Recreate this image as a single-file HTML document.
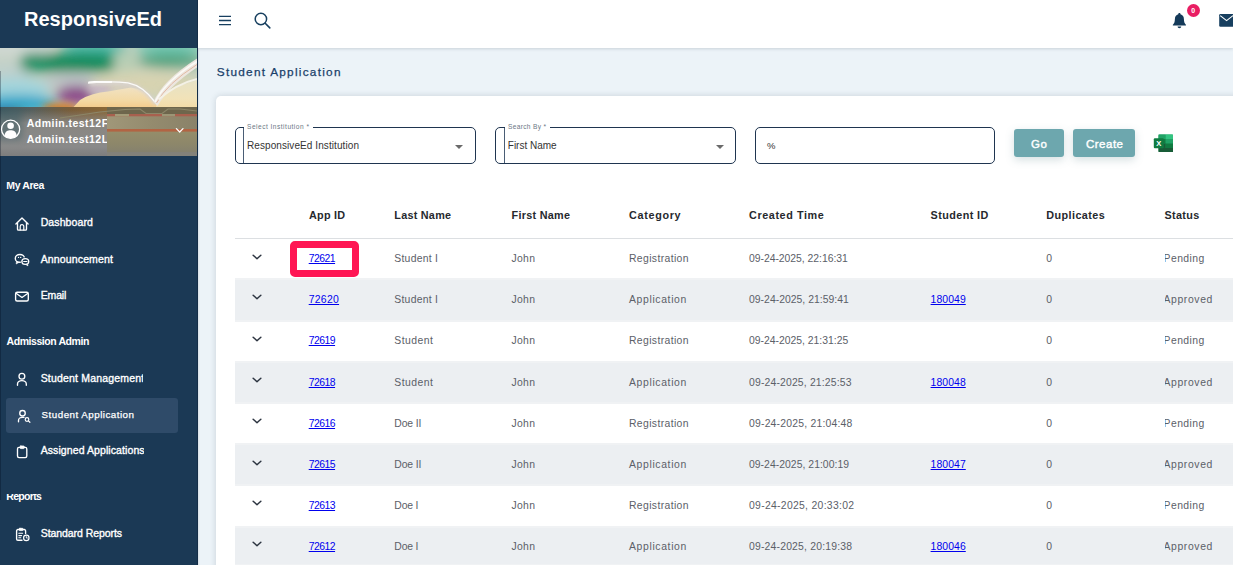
<!DOCTYPE html>
<html lang="en">
<head>
<meta charset="utf-8">
<title>Student Application</title>
<style>
html,body{margin:0;padding:0;}
body{width:1233px;height:565px;overflow:hidden;position:relative;background:#ecf3f8;font-family:'Liberation Sans',sans-serif;}
.t{position:absolute;display:block;white-space:pre;line-height:16px;font-family:'Liberation Sans',sans-serif;}
.abs{position:absolute;}
#sidebar{position:absolute;left:0;top:0;width:198px;height:565px;background:#1b3955;overflow:hidden;}
#topbar{position:absolute;left:198px;top:0;width:1035px;height:48px;background:#fff;box-shadow:0 1px 3px rgba(40,60,80,0.18);}
#card{position:absolute;left:216px;top:96px;width:1030px;height:480px;background:#fff;border-radius:5px;box-shadow:0 0 6px rgba(40,60,80,0.18);}
.gr{position:absolute;left:235px;width:998px;background:#eceff2;border-top:2px solid #f0f2f4;border-bottom:2px solid #f0f2f4;box-sizing:border-box;}
.chev{position:absolute;left:251px;}
.field{position:absolute;top:127px;height:37px;box-sizing:border-box;border:1px solid #1f3550;border-radius:5px;}
.notch{position:absolute;top:126px;height:3px;background:#fff;}
.vline{position:absolute;top:128px;height:35px;width:1px;background:#4a5d75;}
.btn{position:absolute;top:129px;height:28px;background:#6da7ae;border-radius:3px;box-shadow:0 3px 8px rgba(90,130,140,0.25);}
.arrow{position:absolute;width:0;height:0;border-left:4.2px solid transparent;border-right:4.2px solid transparent;border-top:4px solid #6a6a6a;}
</style>
</head>
<body>

<!-- ===== main background pieces ===== -->
<div id="topbar"></div>
<div id="card"></div>
<div class="abs" style="left:235px;top:238px;width:998px;height:1px;background:#dcdfe2;"></div>
<div class="gr" style="top:278px;height:44px"></div>
<div class="gr" style="top:361px;height:43px"></div>
<div class="gr" style="top:443px;height:43px"></div>
<div class="gr" style="top:526px;height:40px"></div>
<svg class="chev" style="top:252.5px" width="12" height="8" viewBox="0 0 12 8"><path d="M2.15 2.3 L6 5.7 L9.85 2.3" fill="none" stroke="#2c3440" stroke-width="1.5" stroke-linecap="round" stroke-linejoin="round"/></svg>
<svg class="chev" style="top:293.4px" width="12" height="8" viewBox="0 0 12 8"><path d="M2.15 2.3 L6 5.7 L9.85 2.3" fill="none" stroke="#2c3440" stroke-width="1.5" stroke-linecap="round" stroke-linejoin="round"/></svg>
<svg class="chev" style="top:334.7px" width="12" height="8" viewBox="0 0 12 8"><path d="M2.15 2.3 L6 5.7 L9.85 2.3" fill="none" stroke="#2c3440" stroke-width="1.5" stroke-linecap="round" stroke-linejoin="round"/></svg>
<svg class="chev" style="top:376.2px" width="12" height="8" viewBox="0 0 12 8"><path d="M2.15 2.3 L6 5.7 L9.85 2.3" fill="none" stroke="#2c3440" stroke-width="1.5" stroke-linecap="round" stroke-linejoin="round"/></svg>
<svg class="chev" style="top:417.2px" width="12" height="8" viewBox="0 0 12 8"><path d="M2.15 2.3 L6 5.7 L9.85 2.3" fill="none" stroke="#2c3440" stroke-width="1.5" stroke-linecap="round" stroke-linejoin="round"/></svg>
<svg class="chev" style="top:458.5px" width="12" height="8" viewBox="0 0 12 8"><path d="M2.15 2.3 L6 5.7 L9.85 2.3" fill="none" stroke="#2c3440" stroke-width="1.5" stroke-linecap="round" stroke-linejoin="round"/></svg>
<svg class="chev" style="top:499.0px" width="12" height="8" viewBox="0 0 12 8"><path d="M2.15 2.3 L6 5.7 L9.85 2.3" fill="none" stroke="#2c3440" stroke-width="1.5" stroke-linecap="round" stroke-linejoin="round"/></svg>
<svg class="chev" style="top:540.4px" width="12" height="8" viewBox="0 0 12 8"><path d="M2.15 2.3 L6 5.7 L9.85 2.3" fill="none" stroke="#2c3440" stroke-width="1.5" stroke-linecap="round" stroke-linejoin="round"/></svg>

<!-- highlight box -->
<div class="abs" style="left:290px;top:241px;width:69px;height:36px;box-sizing:border-box;border:7px solid #ff1654;border-radius:5px;"></div>

<!-- form fields -->
<div class="field" style="left:235px;width:241px;"></div>
<div class="notch" style="left:244px;width:69px;"></div>
<div class="vline" style="left:243px;"></div>
<div class="arrow" style="left:455px;top:145px;"></div>

<div class="field" style="left:495px;width:241px;"></div>
<div class="notch" style="left:505px;width:45px;"></div>
<div class="vline" style="left:504px;"></div>
<div class="arrow" style="left:715.5px;top:145px;"></div>

<div class="field" style="left:755px;width:240px;"></div>

<div class="btn" style="left:1014px;width:50px;"></div>
<div class="btn" style="left:1073px;width:62px;"></div>

<!-- excel icon -->
<svg class="abs" style="left:1153px;top:134px" width="21" height="19" viewBox="0 0 21 19">
  <rect x="5.5" y="0.5" width="14.5" height="17.5" rx="1.2" fill="#21a366"/>
  <rect x="5.5" y="0.5" width="7.2" height="4.6" fill="#21a366"/>
  <rect x="12.7" y="0.5" width="7.3" height="4.6" fill="#33c481"/>
  <rect x="5.5" y="5.1" width="7.2" height="4.4" fill="#107c41"/>
  <rect x="12.7" y="5.1" width="7.3" height="4.4" fill="#21a366"/>
  <rect x="5.5" y="9.5" width="7.2" height="4.4" fill="#185c37"/>
  <rect x="12.7" y="9.5" width="7.3" height="4.4" fill="#107c41"/>
  <rect x="5.5" y="13.9" width="14.5" height="4.1" fill="#185c37"/>
  <rect x="0.8" y="4.3" width="10" height="10" rx="1" fill="#107c41"/>
  <text x="5.8" y="12.2" font-family="'Liberation Sans',sans-serif" font-size="7.6" font-weight="700" fill="#fff" text-anchor="middle">X</text>
</svg>

<!-- topbar icons -->
<svg class="abs" style="left:218px;top:14px" width="14" height="13" viewBox="0 0 14 13">
  <path d="M1 2.4H13M1 6.5H13M1 10.6H13" stroke="#173f5f" stroke-width="1.35" fill="none"/>
</svg>
<svg class="abs" style="left:252px;top:10px" width="20" height="20" viewBox="0 0 20 20">
  <circle cx="8.9" cy="9" r="5.7" fill="none" stroke="#173f5f" stroke-width="1.5"/>
  <path d="M13.2 13.3 L17.8 17.9" stroke="#173f5f" stroke-width="1.6" stroke-linecap="round"/>
</svg>
<svg class="abs" style="left:1171px;top:12px" width="17" height="18" viewBox="0 0 17 18">
  <path d="M8.4 1.1 C9.1 1.1 9.5 1.6 9.5 2.2 C11.7 2.8 12.9 4.6 12.9 7 C12.9 10.3 13.8 11.5 14.9 12.7 C15.2 13 15 13.5 14.5 13.5 H2.3 C1.8 13.5 1.6 13 1.9 12.7 C3 11.5 3.9 10.3 3.9 7 C3.9 4.6 5.1 2.8 7.3 2.2 C7.3 1.6 7.7 1.1 8.4 1.1 Z" fill="#143a59"/>
  <path d="M6.6 14.6 H10.2 C10.2 15.6 9.4 16.3 8.4 16.3 C7.4 16.3 6.6 15.6 6.6 14.6 Z" fill="#143a59"/>
</svg>
<div class="abs" style="left:1187px;top:4px;width:13px;height:13px;border-radius:50%;background:#e91e63;"></div>
<span class="t" style="left:1191.3px;top:2.8px;font-size:7px;font-weight:700;color:#fff;line-height:16px;">0</span>
<svg class="abs" style="left:1219px;top:13px" width="16" height="15" viewBox="0 0 16 15">
  <rect x="0.2" y="1" width="20" height="12.8" rx="1.3" fill="#173f5f"/>
  <path d="M1.2 2.6 L7.6 7.6 L14 2.6" fill="none" stroke="#fff" stroke-width="1.2"/>
</svg>

<!-- ===== sidebar ===== -->
<div id="sidebar">
  <svg class="abs" style="left:0;top:48px" width="197" height="108" viewBox="0 0 197 108">
  <defs>
    <filter id="b7" x="-30%" y="-30%" width="160%" height="160%"><feGaussianBlur stdDeviation="6"/></filter>
    <filter id="b4" x="-30%" y="-30%" width="160%" height="160%"><feGaussianBlur stdDeviation="3.5"/></filter>
    <filter id="b2" x="-20%" y="-20%" width="140%" height="140%"><feGaussianBlur stdDeviation="1.6"/></filter>
    <filter id="b1" x="-10%" y="-10%" width="120%" height="120%"><feGaussianBlur stdDeviation="0.6"/></filter>
    <linearGradient id="cream" x1="0" y1="0" x2="0" y2="1"><stop offset="0" stop-color="#f1e2c2"/><stop offset="0.55" stop-color="#f3d9a4"/><stop offset="1" stop-color="#f4c580"/></linearGradient>
    <linearGradient id="cream2" x1="0" y1="0" x2="0" y2="1"><stop offset="0" stop-color="#e6e2c6"/><stop offset="0.6" stop-color="#f1e2b8"/><stop offset="1" stop-color="#f4d9a0"/></linearGradient>
    <linearGradient id="low" x1="0" y1="0" x2="1" y2="0"><stop offset="0" stop-color="#3f575e"/><stop offset="0.16" stop-color="#56605e"/><stop offset="0.36" stop-color="#7a5d38"/><stop offset="0.55" stop-color="#8a6838"/><stop offset="1" stop-color="#6e644b"/></linearGradient>
    <linearGradient id="low2" x1="0" y1="0" x2="0" y2="1"><stop offset="0" stop-color="rgba(132,130,126,0)"/><stop offset="0.28" stop-color="rgba(138,137,134,0.92)"/><stop offset="0.8" stop-color="#8a8a8a"/><stop offset="1" stop-color="#7d7d7d"/></linearGradient>
    <linearGradient id="blk1" x1="0" y1="0" x2="1" y2="0"><stop offset="0" stop-color="#a09779"/><stop offset="0.5" stop-color="#948b6e"/><stop offset="1" stop-color="#8a8269"/></linearGradient>
    <linearGradient id="blk2" x1="0" y1="0" x2="0" y2="1"><stop offset="0" stop-color="#958d6a"/><stop offset="0.6" stop-color="#8d876a"/><stop offset="1" stop-color="#85816e"/></linearGradient>
    <clipPath id="pc"><rect x="0" y="0" width="197" height="108"/></clipPath>
  </defs>
  <g clip-path="url(#pc)">
    <rect width="197" height="108" fill="#c8d2c2"/>
    <g filter="url(#b7)">
      <rect x="-10" y="-8" width="62" height="15" fill="#cfd8d4"/>
      <rect x="-10" y="14" width="40" height="16" fill="#bfd0cc"/>
      <ellipse cx="95" cy="0" rx="34" ry="6" fill="#45b8a6"/>
      <ellipse cx="170" cy="0" rx="36" ry="7" fill="#6cc6b0"/>
      <rect x="20" y="5" width="96" height="19" rx="9" fill="#1f9266"/>
      <ellipse cx="76" cy="15" rx="32" ry="9" fill="#158a5c"/>
      <ellipse cx="170" cy="13" rx="34" ry="7" fill="#58a27e"/>
      <ellipse cx="126" cy="14" rx="12" ry="10" fill="#b7ceb4"/>
      <ellipse cx="14" cy="41" rx="36" ry="11" fill="#a2d4dc"/>
      <ellipse cx="72" cy="33" rx="28" ry="7" fill="#bcc2c6"/>
      <ellipse cx="145" cy="36" rx="54" ry="13" fill="#d7d3b1"/>
      <ellipse cx="18" cy="56" rx="40" ry="9" fill="#2ba6c8"/>
      <ellipse cx="-4" cy="64" rx="22" ry="5" fill="#3c8cc8"/>
      <ellipse cx="76" cy="47" rx="20" ry="9" fill="#8a3f86"/>
      <ellipse cx="76" cy="48" rx="10" ry="5" fill="#8a3f86"/>
    </g>
    <g filter="url(#b4)">
      <ellipse cx="60" cy="60" rx="18" ry="5" fill="#d07c28"/>
      <ellipse cx="100" cy="41" rx="14" ry="4" fill="#c8b4ca"/>
      <ellipse cx="125" cy="40" rx="14" ry="3" fill="#d6cbc6"/>
      <ellipse cx="176" cy="44" rx="16" ry="5" fill="#cdcbaa"/>
    </g>
    <!-- left page -->
    <path d="M70 63 L80 52 Q92 44.500 108 43.500 L131 39.500 Q142 41 148 47 L156 57 L156 63 Z" fill="url(#cream)" filter="url(#b1)"/>
    <path d="M90 36 Q112 34 130 36.500 Q145 40 155.500 56" fill="none" stroke="#d9d3d2" stroke-width="3.6" filter="url(#b2)" opacity="0.85"/>
    <path d="M88.500 34.800 Q100 33.600 112 34" fill="none" stroke="#ffffff" stroke-width="2.6" filter="url(#b1)"/>
    <path d="M88 35 Q110 32.800 128 34.800 Q143 37.800 154.500 53.500" fill="none" stroke="#fbfaf8" stroke-width="1.3" filter="url(#b1)"/>
    <!-- right pages -->
    <path d="M156 63 L156 55 Q166 41 182 37 L197 32 L197 63 Z" fill="url(#cream2)" filter="url(#b1)"/>
    <path d="M153.500 54 Q162 33 197 10.500 L197 19.500 Q169 38 157.500 58 Z" fill="#ece6df" filter="url(#b1)"/>
    <path d="M155 54 Q165 33.500 197 13.500" fill="none" stroke="#fbfaf6" stroke-width="1.6" filter="url(#b1)"/>
    <path d="M156.500 55 Q167 35.500 197 16.500" fill="none" stroke="#e2b9a4" stroke-width="1" filter="url(#b1)"/>
    <path d="M158.500 51.500 Q176 36 197 31" fill="none" stroke="#f4f1e6" stroke-width="1.8" filter="url(#b1)"/>
    <path d="M156 57 L156 63" stroke="#fbf6ea" stroke-width="1.4" filter="url(#b1)"/>
    <!-- lower (overlaid) zone -->
    <rect x="0" y="59" width="197" height="49" fill="url(#low)"/>
    <rect x="0" y="62" width="197" height="46" fill="url(#low2)"/>
    <rect x="-4" y="60" width="26" height="32" fill="#3f6068" opacity="0.5" filter="url(#b4)"/>
    <rect x="107" y="59" width="90" height="7.500" fill="#6e664c"/>
    <path d="M60 70 L100 64 L125 61.500 L140 61 L146 65.500 L162 65.500 L168 61 L180 61 L197 63" fill="none" stroke="#8c8668" stroke-width="1.1" filter="url(#b1)"/>
    <rect x="107" y="66" width="90" height="15.500" fill="url(#blk1)"/>
    <rect x="107" y="83" width="90" height="21.500" fill="url(#blk2)"/>
    <rect x="107" y="66" width="90" height="2.300" fill="#a8604e"/>
    <rect x="115" y="66" width="14" height="2.300" fill="#a39b78"/>
    <rect x="162" y="66" width="13" height="2.300" fill="#9c9676"/>
    <rect x="107" y="81" width="90" height="2.600" fill="#b26443"/>
    <rect x="107" y="104.500" width="90" height="3.500" fill="#84827a"/>
  </g>
</svg>

  <div class="abs" style="left:6px;top:398px;width:172px;height:35px;border-radius:3px;background:#2f4b69;"></div>
  <svg class="abs" style="left:0;top:0" width="198" height="565" viewBox="0 0 198 565" fill="none" stroke="#fff" stroke-width="1.35" stroke-linecap="round" stroke-linejoin="round">
  <!-- user avatar -->
  <circle cx="10.6" cy="129.300" r="9.100" stroke-width="1.3"/>
  <circle cx="10.6" cy="125.700" r="3.300" fill="#fff" stroke="none"/>
  <path d="M4.500 135.600 C5 131.500 7.600 130.300 10.600 130.300 C13.600 130.300 16.200 131.500 16.700 135.600 C15 137.400 13 138.300 10.600 138.300 C8.200 138.300 6.200 137.400 4.500 135.600 Z" fill="#fff" stroke="none"/>
  <!-- user chevron -->
  <path d="M176.400 128.600 L179.700 132 L183 128.600" stroke-width="1.3"/>
  <!-- home -->
  <path d="M15.900 224 L22 217.900 L28.100 224"/>
  <path d="M17.500 222.900 V229.200 a0.900 0.900 0 0 0 .9 .9 H25.600 a.9 .9 0 0 0 .9 -.9 V222.900"/>
  <path d="M20.200 229.900 V226.400 a1.800 1.800 0 0 1 3.600 0 V229.900" stroke-width="1.2"/>
  <!-- announcement (chat bubbles) -->
  <ellipse cx="19.900" cy="258.400" rx="4.600" ry="3.900" stroke-width="1.4"/>
  <path d="M16.500 261.500 L16.200 264 L18.700 262.500 Z" fill="#fff" stroke-width="0.6"/>
  <circle cx="18.500" cy="257.400" r="0.700" fill="#fff" stroke="none"/>
  <circle cx="20.700" cy="257.400" r="0.700" fill="#fff" stroke="none"/>
  <ellipse cx="25.300" cy="261.500" rx="3.500" ry="3" fill="#1b3955" stroke="#1b3955" stroke-width="2.3"/>
  <path d="M27.200 264 L28 265.900 L25.800 264.600 Z" fill="#fff" stroke-width="0.6"/>
  <ellipse cx="25.300" cy="261.500" rx="3.400" ry="2.900" fill="#1b3955" stroke-width="1.4"/>
  <path d="M23.700 261.500 H26.900" stroke-width="1.2"/>
  <!-- email -->
  <rect x="15.600" y="292.200" width="12.700" height="8.800" rx="1.500"/>
  <path d="M16.400 293.400 L22 297.400 L27.600 293.400" stroke-width="1.25"/>
  <!-- student management (person) -->
  <circle cx="21.900" cy="376.300" r="2.900"/>
  <path d="M17.500 385.200 V384 a4.400 3.400 0 0 1 8.800 0 V385.200"/>
  <!-- student application (person+search) -->
  <circle cx="22.500" cy="413.200" r="2.750"/>
  <path d="M18.500 421.800 V420.400 a3.700 3.100 0 0 1 3.700 -3.100 H24"/>
  <circle cx="27" cy="419.500" r="1.800" stroke-width="1.2"/>
  <path d="M28.400 420.900 L29.900 422.300" stroke-width="1.2"/>
  <!-- assigned applications (clipboard) -->
  <rect x="17.500" y="447.400" width="9.300" height="10.200" rx="1.500"/>
  <rect x="20" y="446" width="4.300" height="2.600" rx="0.800" fill="#fff" stroke-width="0.8"/>
  <!-- standard reports -->
  <path d="M25.600 533.500 V530.800 a1.300 1.300 0 0 0 -1.300 -1.300 H17.900 a1.300 1.300 0 0 0 -1.300 1.300 V538.900 a1.300 1.300 0 0 0 1.300 1.300 H22"/>
  <rect x="19.200" y="528.300" width="3.800" height="2.300" rx="0.700" fill="#fff" stroke-width="0.7"/>
  <path d="M18.800 533.300 H22.600 M18.800 535.600 H21.600 M18.800 537.800 H20.800" stroke-width="1.1"/>
  <circle cx="26.300" cy="537.900" r="2.700" stroke-width="1.200"/>
  <path d="M26.300 536.600 V538 H27.400" stroke-width="0.9"/>
</svg>

</div>
<div class="abs" style="left:196.500px;top:0;width:1.5px;height:565px;background:rgba(5,20,40,0.30);"></div>
<div class="abs" style="left:198px;top:48px;width:2px;height:517px;background:linear-gradient(90deg,rgba(30,50,70,0.10),rgba(30,50,70,0));"></div>
<div class="abs" style="left:0;top:71px;width:1.2px;height:429px;background:rgba(0,10,25,0.30);"></div>

<span class="t" style="left:24.0px;top:11.00px;font-size:20px;font-weight:700;color:#fff;letter-spacing:0.016px;">ResponsiveEd</span>
<div class="abs" style="left:0px;top:182.3px;width:100.0px;height:17.7px;overflow:hidden;"><span class="t" style="left:6.3px;top:-5.30px;font-size:10.5px;font-weight:700;color:#fff;letter-spacing:-0.395px;">My Area</span></div>
<span class="t" style="left:40.7px;top:214.00px;font-size:10.5px;font-weight:400;color:#fff;letter-spacing:0.103px;-webkit-text-stroke:0.35px #fff;">Dashboard</span>
<span class="t" style="left:40.7px;top:251.00px;font-size:10.5px;font-weight:400;color:#fff;letter-spacing:0.142px;-webkit-text-stroke:0.35px #fff;">Announcement</span>
<span class="t" style="left:40.7px;top:287.00px;font-size:10.5px;font-weight:400;color:#fff;letter-spacing:-0.141px;-webkit-text-stroke:0.35px #fff;">Email</span>
<span class="t" style="left:6.5px;top:333.00px;font-size:10.5px;font-weight:700;color:#fff;letter-spacing:-0.427px;">Admission Admin</span>
<div class="abs" style="left:20px;top:119.2px;width:86.7px;height:14.8px;overflow:hidden;"><span class="t" style="left:6.8px;top:-4.20px;font-size:10.5px;font-weight:700;color:#fff;letter-spacing:0.462px;">Admiin.test12First</span></div>
<div class="abs" style="left:20px;top:131px;width:86.7px;height:19.0px;overflow:hidden;"><span class="t" style="left:6.8px;top:0.00px;font-size:10.5px;font-weight:700;color:#fff;letter-spacing:0.462px;">Admiin.test12Last</span></div>
<div class="abs" style="left:30px;top:368px;width:113.0px;height:24.0px;overflow:hidden;"><span class="t" style="left:10.7px;top:2.00px;font-size:10.5px;font-weight:400;color:#fff;letter-spacing:0.182px;-webkit-text-stroke:0.35px #fff;">Student Management</span></div>
<div class="abs" style="left:30px;top:440px;width:113.6px;height:24.0px;overflow:hidden;"><span class="t" style="left:10.7px;top:2.00px;font-size:10.5px;font-weight:400;color:#fff;letter-spacing:0.087px;-webkit-text-stroke:0.35px #fff;">Assigned Applications</span></div>
<div class="abs" style="left:0px;top:494px;width:100.0px;height:16.0px;overflow:hidden;"><span class="t" style="left:6.3px;top:-6.00px;font-size:10.5px;font-weight:700;color:#fff;letter-spacing:-0.698px;">Reports</span></div>
<span class="t" style="left:41.6px;top:407.00px;font-size:9.8px;font-weight:400;color:#fff;letter-spacing:0.473px;-webkit-text-stroke:0.25px #fff;">Student Application</span>
<span class="t" style="left:40.7px;top:525.00px;font-size:10.5px;font-weight:400;color:#fff;letter-spacing:-0.061px;-webkit-text-stroke:0.35px #fff;">Standard Reports</span>
<span class="t" style="left:216.8px;top:64.00px;font-size:11.8px;font-weight:400;color:#19406a;letter-spacing:1.260px;-webkit-text-stroke:0.25px #19406a;">Student Application</span>
<span class="t" style="left:247.0px;top:138.00px;font-size:10px;font-weight:400;color:#333;letter-spacing:0.084px;">ResponsiveEd Institution</span>
<span class="t" style="left:507.8px;top:138.00px;font-size:10px;font-weight:400;color:#333;letter-spacing:-0.001px;">First Name</span>
<span class="t" style="left:767.0px;top:138.00px;font-size:9.5px;font-weight:400;color:#333;letter-spacing:-1.453px;">%</span>
<span class="t" style="left:247.0px;top:119.00px;font-size:6.6px;font-weight:400;color:#6b7785;letter-spacing:0.485px;">Select Institution *</span>
<span class="t" style="left:508.0px;top:119.00px;font-size:6.6px;font-weight:400;color:#6b7785;letter-spacing:0.317px;">Search By *</span>
<span class="t" style="left:1031.0px;top:136.00px;font-size:11.5px;font-weight:400;color:#fff;letter-spacing:0.656px;-webkit-text-stroke:0.4px #fff;">Go</span>
<span class="t" style="left:1086.0px;top:136.00px;font-size:11.5px;font-weight:400;color:#fff;letter-spacing:0.494px;-webkit-text-stroke:0.4px #fff;">Create</span>
<span class="t" style="left:309.1px;top:207.00px;font-size:10.8px;font-weight:700;color:#26292e;letter-spacing:0.221px;">App ID</span>
<span class="t" style="left:394.3px;top:207.00px;font-size:10.8px;font-weight:700;color:#26292e;letter-spacing:0.261px;">Last Name</span>
<span class="t" style="left:511.5px;top:207.00px;font-size:10.8px;font-weight:700;color:#26292e;letter-spacing:0.299px;">First Name</span>
<span class="t" style="left:629.0px;top:207.00px;font-size:10.8px;font-weight:700;color:#26292e;letter-spacing:0.684px;">Category</span>
<span class="t" style="left:749.0px;top:207.00px;font-size:10.8px;font-weight:700;color:#26292e;letter-spacing:0.598px;">Created Time</span>
<span class="t" style="left:930.6px;top:207.00px;font-size:10.8px;font-weight:700;color:#26292e;letter-spacing:0.413px;">Student ID</span>
<span class="t" style="left:1046.3px;top:207.00px;font-size:10.8px;font-weight:700;color:#26292e;letter-spacing:0.421px;">Duplicates</span>
<span class="t" style="left:1164.6px;top:207.00px;font-size:10.8px;font-weight:700;color:#26292e;letter-spacing:0.320px;">Status</span>
<a class="t" style="left:308.7px;top:251.00px;font-size:10.4px;font-weight:400;color:#0000ee;letter-spacing:-0.502px;text-decoration:underline;">72621</a>
<span class="t" style="left:394.3px;top:251.00px;font-size:10.4px;font-weight:400;color:#5b6068;letter-spacing:0.251px;">Student I</span>
<span class="t" style="left:511.5px;top:251.00px;font-size:10.4px;font-weight:400;color:#5b6068;letter-spacing:0.318px;">John</span>
<span class="t" style="left:629.0px;top:251.00px;font-size:10.4px;font-weight:400;color:#5b6068;letter-spacing:0.368px;">Registration</span>
<span class="t" style="left:749.0px;top:251.00px;font-size:10.4px;font-weight:400;color:#5b6068;letter-spacing:-0.030px;">09-24-2025, 22:16:31</span>
<span class="t" style="left:1046.3px;top:251.00px;font-size:10.4px;font-weight:400;color:#5b6068;letter-spacing:-0.081px;">0</span>
<div class="abs" style="left:1164.6px;top:248px;width:68.4px;height:22.0px;overflow:hidden;"><span class="t" style="left:-1.0px;top:3.00px;font-size:10.4px;font-weight:400;color:#5b6068;letter-spacing:0.427px;">Pending</span></div>
<a class="t" style="left:308.7px;top:292.00px;font-size:10.4px;font-weight:400;color:#0000ee;letter-spacing:0.298px;text-decoration:underline;">72620</a>
<span class="t" style="left:394.3px;top:292.00px;font-size:10.4px;font-weight:400;color:#5b6068;letter-spacing:0.251px;">Student I</span>
<span class="t" style="left:511.5px;top:292.00px;font-size:10.4px;font-weight:400;color:#5b6068;letter-spacing:0.318px;">John</span>
<span class="t" style="left:629.0px;top:292.00px;font-size:10.4px;font-weight:400;color:#5b6068;letter-spacing:0.646px;">Application</span>
<span class="t" style="left:749.0px;top:292.00px;font-size:10.4px;font-weight:400;color:#5b6068;letter-spacing:0.022px;">09-24-2025, 21:59:41</span>
<a class="t" style="left:930.6px;top:292.00px;font-size:10.4px;font-weight:400;color:#0000ee;letter-spacing:0.083px;text-decoration:underline;">180049</a>
<span class="t" style="left:1046.3px;top:292.00px;font-size:10.4px;font-weight:400;color:#5b6068;letter-spacing:-0.081px;">0</span>
<div class="abs" style="left:1164.6px;top:289px;width:68.4px;height:22.0px;overflow:hidden;"><span class="t" style="left:-1.2px;top:3.00px;font-size:10.4px;font-weight:400;color:#5b6068;letter-spacing:0.645px;">Approved</span></div>
<a class="t" style="left:308.7px;top:333.00px;font-size:10.4px;font-weight:400;color:#0000ee;letter-spacing:-0.502px;text-decoration:underline;">72619</a>
<span class="t" style="left:394.3px;top:333.00px;font-size:10.4px;font-weight:400;color:#5b6068;letter-spacing:0.479px;">Student</span>
<span class="t" style="left:511.5px;top:333.00px;font-size:10.4px;font-weight:400;color:#5b6068;letter-spacing:0.318px;">John</span>
<span class="t" style="left:629.0px;top:333.00px;font-size:10.4px;font-weight:400;color:#5b6068;letter-spacing:0.368px;">Registration</span>
<span class="t" style="left:749.0px;top:333.00px;font-size:10.4px;font-weight:400;color:#5b6068;letter-spacing:-0.009px;">09-24-2025, 21:31:25</span>
<span class="t" style="left:1046.3px;top:333.00px;font-size:10.4px;font-weight:400;color:#5b6068;letter-spacing:-0.081px;">0</span>
<div class="abs" style="left:1164.6px;top:330px;width:68.4px;height:22.0px;overflow:hidden;"><span class="t" style="left:-1.0px;top:3.00px;font-size:10.4px;font-weight:400;color:#5b6068;letter-spacing:0.427px;">Pending</span></div>
<a class="t" style="left:308.7px;top:375.00px;font-size:10.4px;font-weight:400;color:#0000ee;letter-spacing:-0.502px;text-decoration:underline;">72618</a>
<span class="t" style="left:394.3px;top:375.00px;font-size:10.4px;font-weight:400;color:#5b6068;letter-spacing:0.479px;">Student</span>
<span class="t" style="left:511.5px;top:375.00px;font-size:10.4px;font-weight:400;color:#5b6068;letter-spacing:0.318px;">John</span>
<span class="t" style="left:629.0px;top:375.00px;font-size:10.4px;font-weight:400;color:#5b6068;letter-spacing:0.646px;">Application</span>
<span class="t" style="left:749.0px;top:375.00px;font-size:10.4px;font-weight:400;color:#5b6068;letter-spacing:0.164px;">09-24-2025, 21:25:53</span>
<a class="t" style="left:930.6px;top:375.00px;font-size:10.4px;font-weight:400;color:#0000ee;letter-spacing:0.083px;text-decoration:underline;">180048</a>
<span class="t" style="left:1046.3px;top:375.00px;font-size:10.4px;font-weight:400;color:#5b6068;letter-spacing:-0.081px;">0</span>
<div class="abs" style="left:1164.6px;top:372px;width:68.4px;height:22.0px;overflow:hidden;"><span class="t" style="left:-1.2px;top:3.00px;font-size:10.4px;font-weight:400;color:#5b6068;letter-spacing:0.645px;">Approved</span></div>
<a class="t" style="left:308.7px;top:416.00px;font-size:10.4px;font-weight:400;color:#0000ee;letter-spacing:-0.502px;text-decoration:underline;">72616</a>
<span class="t" style="left:394.3px;top:416.00px;font-size:10.4px;font-weight:400;color:#5b6068;letter-spacing:-0.107px;">Doe II</span>
<span class="t" style="left:511.5px;top:416.00px;font-size:10.4px;font-weight:400;color:#5b6068;letter-spacing:0.318px;">John</span>
<span class="t" style="left:629.0px;top:416.00px;font-size:10.4px;font-weight:400;color:#5b6068;letter-spacing:0.368px;">Registration</span>
<span class="t" style="left:749.0px;top:416.00px;font-size:10.4px;font-weight:400;color:#5b6068;letter-spacing:0.207px;">09-24-2025, 21:04:48</span>
<span class="t" style="left:1046.3px;top:416.00px;font-size:10.4px;font-weight:400;color:#5b6068;letter-spacing:-0.081px;">0</span>
<div class="abs" style="left:1164.6px;top:413px;width:68.4px;height:22.0px;overflow:hidden;"><span class="t" style="left:-1.0px;top:3.00px;font-size:10.4px;font-weight:400;color:#5b6068;letter-spacing:0.427px;">Pending</span></div>
<a class="t" style="left:308.7px;top:457.00px;font-size:10.4px;font-weight:400;color:#0000ee;letter-spacing:-0.502px;text-decoration:underline;">72615</a>
<span class="t" style="left:394.3px;top:457.00px;font-size:10.4px;font-weight:400;color:#5b6068;letter-spacing:-0.107px;">Doe II</span>
<span class="t" style="left:511.5px;top:457.00px;font-size:10.4px;font-weight:400;color:#5b6068;letter-spacing:0.318px;">John</span>
<span class="t" style="left:629.0px;top:457.00px;font-size:10.4px;font-weight:400;color:#5b6068;letter-spacing:0.646px;">Application</span>
<span class="t" style="left:749.0px;top:457.00px;font-size:10.4px;font-weight:400;color:#5b6068;letter-spacing:0.033px;">09-24-2025, 21:00:19</span>
<a class="t" style="left:930.6px;top:457.00px;font-size:10.4px;font-weight:400;color:#0000ee;letter-spacing:0.083px;text-decoration:underline;">180047</a>
<span class="t" style="left:1046.3px;top:457.00px;font-size:10.4px;font-weight:400;color:#5b6068;letter-spacing:-0.081px;">0</span>
<div class="abs" style="left:1164.6px;top:454px;width:68.4px;height:22.0px;overflow:hidden;"><span class="t" style="left:-1.2px;top:3.00px;font-size:10.4px;font-weight:400;color:#5b6068;letter-spacing:0.645px;">Approved</span></div>
<a class="t" style="left:308.7px;top:498.00px;font-size:10.4px;font-weight:400;color:#0000ee;letter-spacing:-0.502px;text-decoration:underline;">72613</a>
<span class="t" style="left:394.3px;top:498.00px;font-size:10.4px;font-weight:400;color:#5b6068;letter-spacing:-0.161px;">Doe I</span>
<span class="t" style="left:511.5px;top:498.00px;font-size:10.4px;font-weight:400;color:#5b6068;letter-spacing:0.318px;">John</span>
<span class="t" style="left:629.0px;top:498.00px;font-size:10.4px;font-weight:400;color:#5b6068;letter-spacing:0.368px;">Registration</span>
<span class="t" style="left:749.0px;top:498.00px;font-size:10.4px;font-weight:400;color:#5b6068;letter-spacing:0.296px;">09-24-2025, 20:33:02</span>
<span class="t" style="left:1046.3px;top:498.00px;font-size:10.4px;font-weight:400;color:#5b6068;letter-spacing:-0.081px;">0</span>
<div class="abs" style="left:1164.6px;top:495px;width:68.4px;height:22.0px;overflow:hidden;"><span class="t" style="left:-1.0px;top:3.00px;font-size:10.4px;font-weight:400;color:#5b6068;letter-spacing:0.427px;">Pending</span></div>
<a class="t" style="left:308.7px;top:539.00px;font-size:10.4px;font-weight:400;color:#0000ee;letter-spacing:-0.502px;text-decoration:underline;">72612</a>
<span class="t" style="left:394.3px;top:539.00px;font-size:10.4px;font-weight:400;color:#5b6068;letter-spacing:-0.161px;">Doe I</span>
<span class="t" style="left:511.5px;top:539.00px;font-size:10.4px;font-weight:400;color:#5b6068;letter-spacing:0.318px;">John</span>
<span class="t" style="left:629.0px;top:539.00px;font-size:10.4px;font-weight:400;color:#5b6068;letter-spacing:0.646px;">Application</span>
<span class="t" style="left:749.0px;top:539.00px;font-size:10.4px;font-weight:400;color:#5b6068;letter-spacing:0.191px;">09-24-2025, 20:19:38</span>
<a class="t" style="left:930.6px;top:539.00px;font-size:10.4px;font-weight:400;color:#0000ee;letter-spacing:0.083px;text-decoration:underline;">180046</a>
<span class="t" style="left:1046.3px;top:539.00px;font-size:10.4px;font-weight:400;color:#5b6068;letter-spacing:-0.081px;">0</span>
<div class="abs" style="left:1164.6px;top:536px;width:68.4px;height:22.0px;overflow:hidden;"><span class="t" style="left:-1.2px;top:3.00px;font-size:10.4px;font-weight:400;color:#5b6068;letter-spacing:0.645px;">Approved</span></div>

</body>
</html>
